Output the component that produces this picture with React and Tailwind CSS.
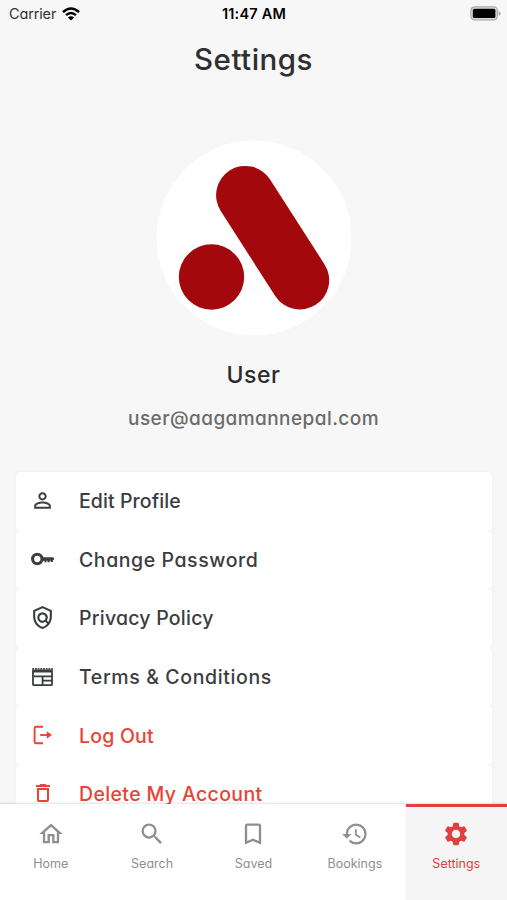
import {
  MdPersonOutline,
  MdOutlinePolicy,
  MdDeleteOutline,
  MdOutlineHome,
  MdSearch,
  MdBookmarkBorder,
  MdHistory,
  MdSettings,
} from "react-icons/md";

function KeyIcon() {
  return (
    <svg className="mb-px" width="24" height="16" viewBox="0 0 24 16" fill="none">
      <circle cx="6.3" cy="8" r="4.7" stroke="currentColor" strokeWidth="3.1" />
      <path
        d="M11 6.2H22.3L23.4 7.9L21.9 9.6V10.9H19.8V9.8H18.7V11.2H16.5V9.8H15.4V11.2H13.4V9.8H11Z"
        fill="currentColor"
      />
    </svg>
  );
}

function NewspaperIcon() {
  return (
    <svg width="21" height="20" viewBox="0 0 21 20" fill="none" stroke="currentColor">
      <path d="M1 4V17.2Q1 18.2 2 18.2H19Q20 18.2 20 17.2V4" strokeWidth="1.8" />
      <path d="M0.2 4H20.8" strokeWidth="3" />
      <path d="M0.3 1.8H20.8" strokeWidth="1.8" strokeDasharray="1.7 1" />
      <path d="M1 9.3H20M10.6 9.3V18M10.6 13.6H20" strokeWidth="1.8" />
    </svg>
  );
}

function LogoutIcon() {
  return (
    <svg className="mb-px" width="20" height="20" viewBox="0 0 20 20" fill="none" stroke="currentColor">
      <path d="M10 1.8H3Q1.6 1.8 1.6 3.2V16.8Q1.6 18.2 3 18.2H10" strokeWidth="1.9" />
      <path d="M7.2 10H15.5" strokeWidth="1.9" />
      <path d="M13.9 6.2L18.9 10L13.9 13.8Z" fill="currentColor" stroke="none" />
    </svg>
  );
}

const rows = [
  { label: "Edit Profile", icon: <MdPersonOutline className="mb-[2px]" size={25} />, color: "text-[#3b3d40]", spacing: "tracking-[0.08px]" },
  { label: "Change Password", icon: <KeyIcon />, color: "text-[#3b3d40]", spacing: "tracking-[0.57px]" },
  { label: "Privacy Policy", icon: <MdOutlinePolicy className="mb-px" size={25} />, color: "text-[#3b3d40]", spacing: "tracking-[0.23px]" },
  { label: "Terms & Conditions", icon: <NewspaperIcon />, color: "text-[#3b3d40]", spacing: "tracking-[0.62px]" },
  { label: "Log Out", icon: <LogoutIcon />, color: "text-[#ea4335]", spacing: "tracking-[0.2px]" },
  { label: "Delete My Account", icon: <MdDeleteOutline className="mb-[3px]" size={24} />, color: "text-[#ea4335]", spacing: "tracking-[0.36px]" },
];

const tabs = [
  { label: "Home", Icon: MdOutlineHome },
  { label: "Search", Icon: MdSearch },
  { label: "Saved", Icon: MdBookmarkBorder },
  { label: "Bookings", Icon: MdHistory },
  { label: "Settings", Icon: MdSettings, active: true },
];

function StatusBar() {
  return (
    <header className="grid h-7 shrink-0 grid-cols-3 items-center pr-[6px] pl-[9px] text-[14.5px] leading-none text-black">
      <div className="flex items-center gap-[6px]">
        <span className="tracking-[-0.15px] text-[#333]">Carrier</span>
        <svg className="mb-px" width="18" height="14" viewBox="0 0 18 14" fill="none" stroke="#000">
          <path d="M1 5.1Q9 -2.1 17 5.1" strokeWidth="2.6" />
          <path d="M4 8.2Q9 3.8 14 8.2" strokeWidth="2.4" />
          <path d="M9 13.6L5.9 10.4Q9 7.9 12.1 10.4Z" fill="#000" stroke="none" />
        </svg>
      </div>
      <span className="-ml-[2px] text-center font-semibold tracking-[0.2px] whitespace-nowrap">11:47 AM</span>
      <svg className="mb-[2px] justify-self-end" width="31" height="15" viewBox="0 0 31 15">
        <rect x="0.9" y="0.9" width="26.4" height="13" rx="3.6" fill="#ddd" stroke="#aaa" strokeWidth="1.2" />
        <rect x="2.8" y="2.8" width="22.6" height="9.2" rx="1.6" fill="#000" />
        <path d="M28.6 5Q30.6 5.6 30.6 7.4T28.6 9.8Z" fill="#aaa" />
      </svg>
    </header>
  );
}

function Avatar() {
  return (
    <svg className="mt-[61px] shrink-0" width="196" height="196" viewBox="0 0 196 196">
      <circle cx="98" cy="98" r="97.5" fill="#fff" />
      <circle cx="55.5" cy="137" r="32.7" fill="#a3080c" />
      <path d="M89.4 55.2L143.9 140.2" stroke="#a3080c" strokeWidth="58.6" strokeLinecap="round" />
    </svg>
  );
}

export default function App() {
  return (
    <div className="flex h-[900px] w-[507px] flex-col overflow-hidden bg-[#f7f7f7] font-['Inter',sans-serif] [font-feature-settings:'cv11']">
      <StatusBar />
      <main className="flex min-h-0 flex-1 flex-col items-center overflow-hidden">
        <h1 className="mt-[11px] text-[29.5px] leading-10 font-medium tracking-[0.5px] whitespace-nowrap text-[#2f2f31]">
          Settings
        </h1>
        <Avatar />
        <h2 className="mt-[23px] text-[23px] leading-8 font-medium tracking-[0.5px] whitespace-nowrap text-[#2b2b2d]">
          User
        </h2>
        <p className="mt-[14px] text-[19px] leading-7 font-medium tracking-[0.43px] whitespace-nowrap text-[#6b6b6b]">
          user@aagamannepal.com
        </p>
        <ul className="mt-[39px] w-[476px] shrink-0 shadow-[0_0_3px_rgba(0,0,0,0.035)]">
          {rows.map((row) => (
            <li
              key={row.label}
              className={`flex h-[58.6px] items-center rounded-[5px] bg-white pl-[11px] ${row.color}`}
            >
              <span className="flex w-8 shrink-0 justify-center">{row.icon}</span>
              <span className={`ml-[20.5px] text-[19.5px] leading-7 font-medium whitespace-nowrap ${row.spacing}`}>
                {row.label}
              </span>
            </li>
          ))}
        </ul>
      </main>
      <nav className="z-10 grid h-[96px] shrink-0 grid-cols-5 bg-white shadow-[0_-1px_2px_rgba(0,0,0,0.12)]">
        {tabs.map(({ label, Icon, active }) => (
          <div
            key={label}
            className={`flex flex-col items-center border-t-[3px] pt-[13px] ${
              active ? "border-[#e04040] bg-[#f5f5f5] text-[#e04040]" : "border-transparent text-[#8f8f8f]"
            }`}
          >
            <Icon size={28} />
            <span className="mt-[8px] text-[12.5px] leading-4">{label}</span>
          </div>
        ))}
      </nav>
    </div>
  );
}
